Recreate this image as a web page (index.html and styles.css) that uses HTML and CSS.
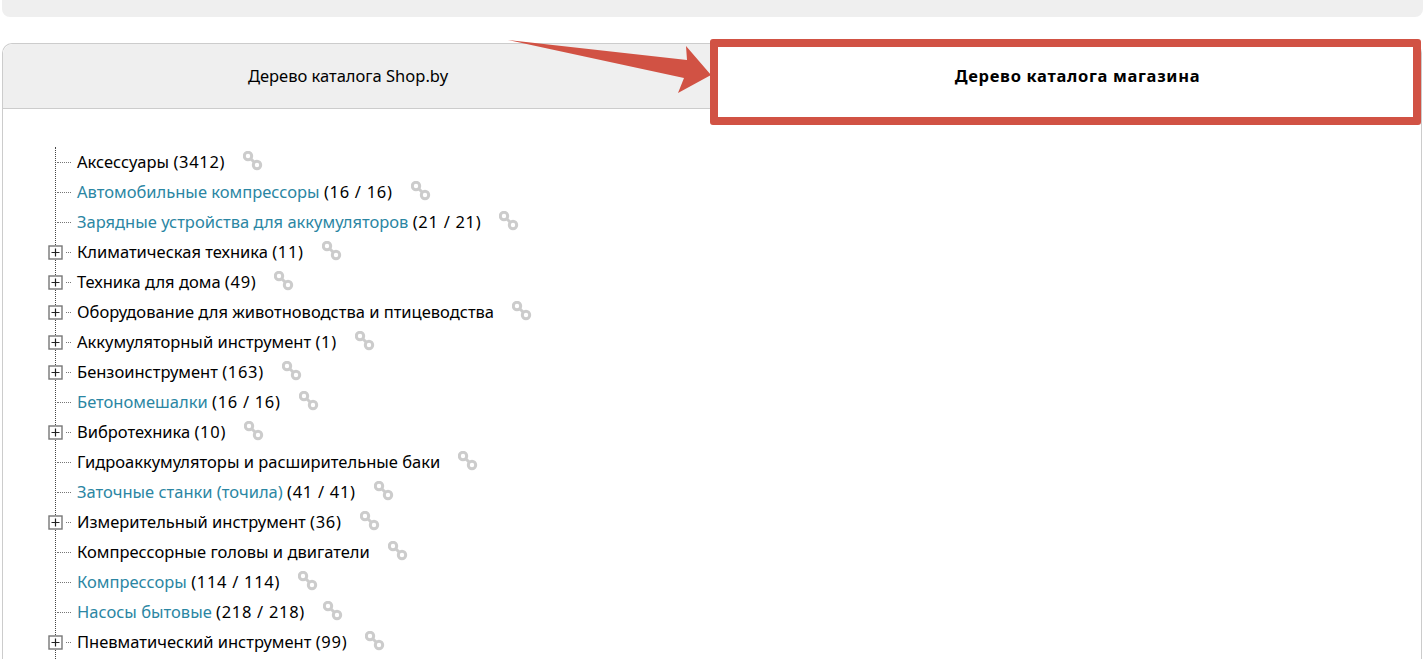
FILE: index.html
```html
<!DOCTYPE html>
<html lang="ru">
<head>
<meta charset="utf-8">
<title>Дерево каталога</title>
<link rel="stylesheet" href="styles.css">
</head>
<body>
<svg class="defs" width="0" height="0" aria-hidden="true">
  <symbol id="link" viewBox="0 0 20 20">
    <circle cx="5" cy="5" r="3.7" fill="none" stroke="#ccc" stroke-width="3"/>
    <circle cx="14" cy="14" r="3.7" fill="none" stroke="#ccc" stroke-width="3"/>
    <path d="M7.5 7.5l4 4" stroke="#ccc" stroke-width="3"/>
  </symbol>
  <symbol id="plus" viewBox="0 0 15 15">
    <rect x="1" y="1" width="13" height="13" fill="#fff" stroke="#777" stroke-width="1.4"/>
    <path d="M3.5 7.5h8M7.5 3.5v8" stroke="#222" stroke-width="1.2"/>
  </symbol>
</svg>
<div class="topbar"></div>
<main class="panel">
  <div class="tabs">
    <div class="tab tab-shop"><span class="tab-label">Дерево каталога Shop.by</span></div>
    <div class="tab tab-store"><span class="tab-label">Дерево каталога магазина</span></div>
  </div>
  <ul class="tree">
    <li class="row"><span class="conn"></span><span class="name">Аксессуары <span class="count">(3412)</span></span><svg class="link"><use href="#link"/></svg></li>
    <li class="row"><span class="conn"></span><span class="name"><a class="cat" href="#">Автомобильные компрессоры</a> <span class="count">(16 / 16)</span></span><svg class="link"><use href="#link"/></svg></li>
    <li class="row"><span class="conn"></span><span class="name"><a class="cat" href="#">Зарядные устройства для аккумуляторов</a> <span class="count">(21 / 21)</span></span><svg class="link"><use href="#link"/></svg></li>
    <li class="row"><svg class="toggle"><use href="#plus"/></svg><span class="conn conn-short"></span><span class="name">Климатическая техника <span class="count">(11)</span></span><svg class="link"><use href="#link"/></svg></li>
    <li class="row"><svg class="toggle"><use href="#plus"/></svg><span class="conn conn-short"></span><span class="name">Техника для дома <span class="count">(49)</span></span><svg class="link"><use href="#link"/></svg></li>
    <li class="row"><svg class="toggle"><use href="#plus"/></svg><span class="conn conn-short"></span><span class="name">Оборудование для животноводства и птицеводства</span><svg class="link"><use href="#link"/></svg></li>
    <li class="row"><svg class="toggle"><use href="#plus"/></svg><span class="conn conn-short"></span><span class="name">Аккумуляторный инструмент <span class="count">(1)</span></span><svg class="link"><use href="#link"/></svg></li>
    <li class="row"><svg class="toggle"><use href="#plus"/></svg><span class="conn conn-short"></span><span class="name">Бензоинструмент <span class="count">(163)</span></span><svg class="link"><use href="#link"/></svg></li>
    <li class="row"><span class="conn"></span><span class="name"><a class="cat" href="#">Бетономешалки</a> <span class="count">(16 / 16)</span></span><svg class="link"><use href="#link"/></svg></li>
    <li class="row"><svg class="toggle"><use href="#plus"/></svg><span class="conn conn-short"></span><span class="name">Вибротехника <span class="count">(10)</span></span><svg class="link"><use href="#link"/></svg></li>
    <li class="row"><span class="conn"></span><span class="name">Гидроаккумуляторы и расширительные баки</span><svg class="link"><use href="#link"/></svg></li>
    <li class="row"><span class="conn"></span><span class="name"><a class="cat" href="#">Заточные станки (точила)</a> <span class="count">(41 / 41)</span></span><svg class="link"><use href="#link"/></svg></li>
    <li class="row"><svg class="toggle"><use href="#plus"/></svg><span class="conn conn-short"></span><span class="name">Измерительный инструмент <span class="count">(36)</span></span><svg class="link"><use href="#link"/></svg></li>
    <li class="row"><span class="conn"></span><span class="name">Компрессорные головы и двигатели</span><svg class="link"><use href="#link"/></svg></li>
    <li class="row"><span class="conn"></span><span class="name"><a class="cat" href="#">Компрессоры</a> <span class="count">(114 / 114)</span></span><svg class="link"><use href="#link"/></svg></li>
    <li class="row"><span class="conn"></span><span class="name"><a class="cat" href="#">Насосы бытовые</a> <span class="count">(218 / 218)</span></span><svg class="link"><use href="#link"/></svg></li>
    <li class="row"><svg class="toggle"><use href="#plus"/></svg><span class="conn conn-short"></span><span class="name">Пневматический инструмент <span class="count">(99)</span></span><svg class="link"><use href="#link"/></svg></li>
  </ul>
</main>
<div class="callout-box"></div>
<svg class="callout-arrow" width="210" height="60" viewBox="0 0 210 60" aria-hidden="true">
  <polygon points="0,0 179,20 178,6 203,35 170,53 176,38" fill="#d15244"/>
</svg>
</body>
</html>
```
FILE: styles.css
```css
html, body {
  margin: 0;
  padding: 0;
  height: 659px;
  overflow: hidden;
  background: #fff;
}
body {
  font-family: "Noto Sans", "DejaVu Sans", sans-serif;
  font-size: 16.5px;
  color: #000;
  position: relative;
}
.defs { display: block; height: 0; }
.topbar {
  height: 17px;
  margin-left: 2px;
  background: #efefef;
  border-radius: 0 0 8px 8px;
}
.panel {
  margin: 26px 1px 0 2px;
  border: 1px solid #ccc;
  border-bottom: 0;
  border-radius: 10px 10px 0 0;
  height: 640px;
}
.tabs { display: flex; height: 65px; }
.tab { display: flex; align-items: center; justify-content: center; }
.tab-label { padding-bottom: 2px; }
.tab-shop {
  width: 707px;
  padding-right: 17px;
  box-sizing: border-box;
  background: #efefef;
  border-bottom: 1px solid #ccc;
  border-radius: 10px 0 0 0;
}
.tab-store {
  flex: 1;
  padding-left: 24px;
  background: #fff;
  font-weight: 700;
  letter-spacing: 0.7px;
}
.tree {
  list-style: none;
  margin: 38px 0 0 52px;
  padding: 0 0 30px;
  border-left: 1px dotted #444;
}
.row { display: flex; align-items: center; height: 30px; }
.conn {
  width: 14px;
  margin: 0 6px 0 1px;
  border-top: 1px dotted #777;
}
.conn-short { width: 5px; margin: 0 6px 0 3px; }
.toggle {
  width: 15px;
  height: 15px;
  margin-left: -8px;
}
.name { white-space: nowrap; padding-bottom: 2px; }
.count { letter-spacing: 0.7px; }
.cat { color: #2b86a3; text-decoration: none; }
.link {
  width: 20px;
  height: 20px;
  margin: -2px 0 0 18px;
  flex: none;
}
.callout-box {
  position: absolute;
  left: 710px;
  top: 39px;
  width: 711px;
  height: 86px;
  box-sizing: border-box;
  border: 8px solid #d15244;
  border-radius: 3px;
}
.callout-arrow {
  position: absolute;
  left: 508px;
  top: 40px;
}
```
